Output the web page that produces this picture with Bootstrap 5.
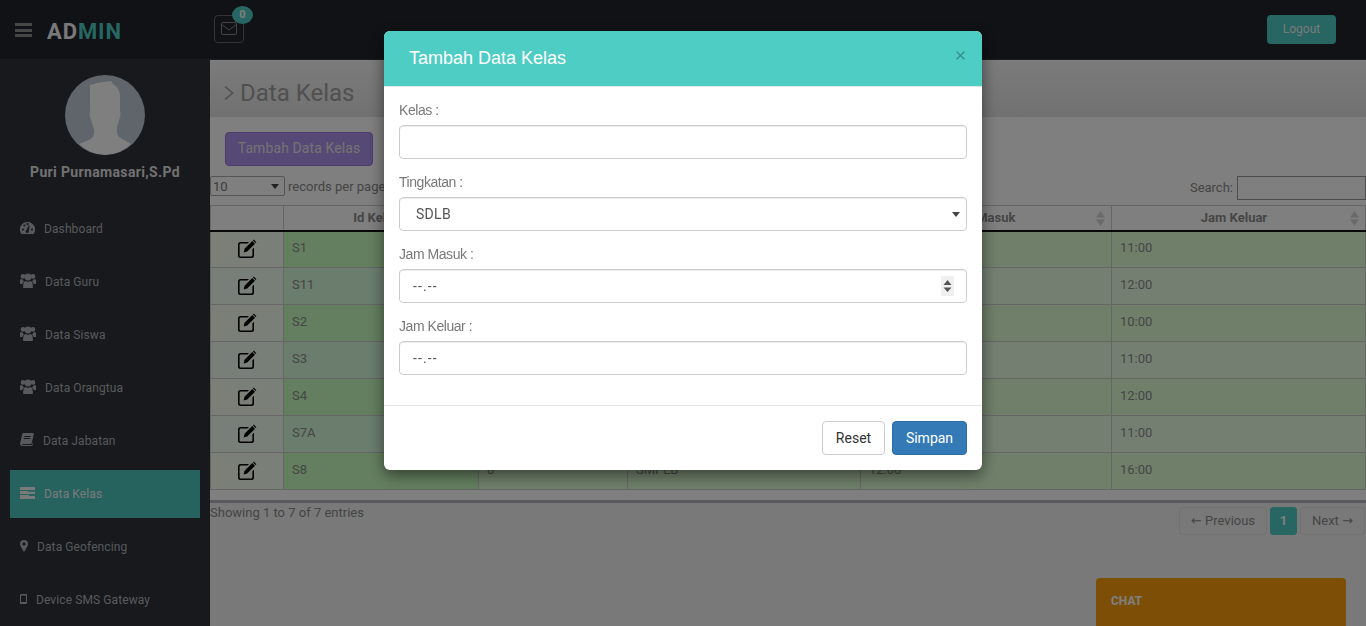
<!DOCTYPE html>
<html lang="id">

<head>
  <meta charset="UTF-8" />
  <meta name="viewport" content="width=device-width, initial-scale=1.0" />
  <title>Data Kelas</title>
  <link href="https://cdn.jsdelivr.net/npm/bootstrap@5.3.3/dist/css/bootstrap.min.css" rel="stylesheet" />
  <style>
    html, body { height: 626px; overflow: hidden; }
    body { font-family: Roboto, "Noto Sans", sans-serif; font-size: 13px; color: #8a8a8a; background: #f2f2f2; }

    /* header */
    .top-bar { height: 60px; background: #22242a; border-bottom: 1px solid #33363d; padding: 0 30px 0 15px; }
    .burger { width: 17px; height: 14px; border-top: 3px solid #8d8d8d; border-bottom: 3px solid #8d8d8d; position: relative; }
    .burger::after { content: ""; position: absolute; left: 0; right: 0; top: 3px; height: 3px; background: #8d8d8d; }
    .brand { font-size: 22px; font-weight: 700; letter-spacing: .9px; color: #f2f2f2; margin-left: 15px; width: 167px; padding-top: 3px; }
    .brand span { color: #4ecdc4; }
    .mail-btn { width: 30px; height: 28px; border: 1px solid #666; border-radius: 4px; margin-top: -2px; }
    .mail-btn svg { width: 16px; height: 13px; stroke: #888; fill: none; }
    .mail-count { top: -10px; left: 17px; width: 21px; height: 18px; border-radius: 50%; background: #4ecdc4; color: #fff; font-size: 11px; font-weight: 700; line-height: 18px; text-align: center; }
    .logout-btn { background: #4ecdc4; color: #f2f2f2; font-size: 12px; width: 69px; height: 29px; border-radius: 4px; line-height: 29px; text-align: center; margin-top: -1px; }

    /* sidebar */
    .side-bar { width: 210px; flex: none; height: 566px; background: #2f323a; padding-top: 15px; }
    .avatar { width: 80px; height: 80px; border-radius: 50%; background: #bfcbd6; overflow: hidden; }
    .avatar svg { width: 80px; height: 80px; fill: #fff; }
    .user-name { color: #fff; font-size: 14px; font-weight: 700; margin: 7px 0 23px; line-height: 20px; letter-spacing: .35px; opacity: .86; }
    .side-link { height: 48px; margin: 0 10px 5px; padding-left: 10px; color: #aeb2b7; font-size: 12px; letter-spacing: .1px; }
    .side-link svg { fill: #aeb2b7; margin-right: 9px; margin-top: -3px; flex: none; }
    .side-link.on { background: #4ecdc4; color: #fff; opacity: .95; }
    .side-link.on svg { fill: #fff; }

    /* content */
    .main-col { min-width: 0; flex: 1; }
    .title-band { height: 57px; background: linear-gradient(#f8f8f8, #e2e2e2); padding: 9px 0 0 13px; color: #9e9e9e; }
    .title-band svg { stroke: #9e9e9e; fill: none; stroke-width: 1.6; margin-right: 6px; }
    .title-band h1 { font-size: 24px; font-weight: 400; margin: 0; color: #a0a0a0; }
    .white-panel { height: 386px; background: #fff; border-bottom: 3px solid #b4b4bd; padding-top: 15px; }
    .add-btn { background: #ac92ec; color: #e6e6e6; border: 1px solid #967adc; border-radius: 4px; height: 34px; width: 148px; line-height: 30px; text-align: center; font-size: 14px; margin: 0 0 10px 15px; letter-spacing: .1px; }
    .tools-row { height: 29px; font-size: 13px; }
    .len-select { width: 75px; height: 20px; font-size: 13px; border: 1px solid #aaa; border-radius: 2px; padding: 0 0 0 2px; margin-right: 3px; color: #777; background-position: right 5px center; background-size: 8px 5px; }
    .search-label { padding-top: 2px; }
    .search-box { width: 129px; height: 24px; border: 1.5px solid #999; background: #fff; margin-left: 4px; }

    .kelas-table { table-layout: fixed; width: 100%; border-collapse: collapse; color: #8c8c8c; }
    .kelas-table col:nth-child(1) { width: 73px; }
    .kelas-table col:nth-child(2) { width: 195px; }
    .kelas-table col:nth-child(3) { width: 149px; }
    .kelas-table col:nth-child(4) { width: 233px; }
    .kelas-table col:nth-child(5) { width: 251px; }
    .kelas-table th, .kelas-table td { border: 1px solid #ccc; }
    .kelas-table th { height: 25px; padding: 0 9px 0 0; text-align: center; font-weight: 700; font-size: 13px; border-bottom: 2px solid #111; position: relative; color: #8c8c8c; }
    .kelas-table td { height: 37px; padding: 6px 8px 9px; line-height: 20px; background: #deffd4; }
    .kelas-table tr:nth-child(even) td { background: #e8ffe4; }
    .kelas-table td:nth-child(1) { background: #f4ffee; text-align: center; padding: 0; }
    .kelas-table tr:nth-child(even) td:nth-child(1) { background: #f0fff0; }
    .kelas-table td:nth-child(2) { background: #c8ffbe; }
    .kelas-table tr:nth-child(even) td:nth-child(2) { background: #d6fbd8; }
    .edit-ico { width: 20px; height: 20px; color: #000; display: block; margin: -1px auto 0; }
    .sort-ico { position: absolute; right: 6px; top: 5px; width: 9px; height: 15px; fill: #d4d4d4; }

    .page-foot { font-size: 13px; }
    .pager-btn { height: 28px; border: 1px solid #e4e4e4; border-radius: 3px; line-height: 26px; text-align: center; color: #8c8c8c; margin-left: 3px; }
    .pager-prev { width: 88px; }
    .pager-next { width: 65px; margin-right: 1px; }
    .pager-btn span { font-family: "DejaVu Sans", sans-serif; }
    .pager-btn.on { background: #4ecdc4; color: #fff; border-color: #4ecdc4; font-weight: 700; width: 27px; }

    .chat-tab { position: fixed; left: 1096px; top: 578px; width: 250px; height: 60px; background: #fa9f0c; border-radius: 4px 4px 0 0; color: #fff; font-size: 12px; font-weight: 700; padding: 15px; line-height: 17px; }

    /* modal */
    .modal-dialog { margin: 31px auto; --bs-modal-width: 598px; }
    .modal-content { border: 0; border-radius: 6px; box-shadow: 0 5px 15px rgba(0, 0, 0, .5); }
    .modal-head { height: 56px; background: #4ecdc4; border-bottom: 1px solid #e5e5e5; border-radius: 6px 6px 0 0; padding: 0 16px 0 25px; }
    .modal-head h5 { font-family: "Liberation Sans", Arial, sans-serif; font-size: 18px; font-weight: 400; margin: 0; color: #fff; }
    .close-x { width: 11px; height: 11px; padding: 0; background-size: 11px; opacity: .3; margin-top: -6px; }
    .modal-main { padding: 14px 15px 15px; height: 318px; }
    .field { margin-bottom: 14px; }
    .field label { display: block; font-family: "Liberation Sans", Arial, sans-serif; font-size: 14px; letter-spacing: -.45px; line-height: 18px; margin-bottom: 6px; color: #797979; }
    .field input, .field select { height: 34px; padding: 6px 12px; font-size: 14px; color: #555; border: 1px solid #ccc; border-radius: 4px; box-shadow: inset 0 1px 1px rgba(0, 0, 0, .075); background-color: #fff; }
    .field input { letter-spacing: 1.1px; padding-left: 13px; }
    .field select { letter-spacing: .3px; padding-left: 16px; font-family: Roboto, sans-serif; background-position: right 6px center; background-size: 8px 5px; }
    .form-select { background-image: url("data:image/svg+xml,%3csvg xmlns='http://www.w3.org/2000/svg' viewBox='0 0 8 5'%3e%3cpath fill='%23444' d='M0 0h8L4 5z'/%3e%3c/svg%3e"); }
    .spin-box { right: 13px; top: 7px; width: 13px; height: 20px; background: #f0f0f0; }
    .spin-box svg { width: 13px; height: 20px; fill: #555; display: block; }
    .modal-foot { border-top: 1px solid #e5e5e5; padding: 15px; height: 65px; gap: 7px; }
    .foot-btn { height: 34px; line-height: 32px; border-radius: 4px; font-size: 14px; text-align: center; border: 1px solid #ccc; color: #333; background: #fff; padding: 0; }
    .foot-btn.reset-btn { width: 63px; }
    .foot-btn.save-btn { width: 75px; background: #337ab7; border-color: #2e6da4; color: #fff; }
  </style>
</head>

<body>
  <svg width="0" height="0" class="position-absolute">
    <symbol id="i-edit" viewBox="0 0 20 20">
      <path d="M3.500 3H12L10.400 4.600H3.800Q2.600 4.600 2.600 5.800V16.200Q2.600 17.400 3.800 17.400H14.200Q15.400 17.400 15.400 16.200V10.300L17 8.700V16.500Q17 19 14.500 19H3.500Q1 19 1 16.500V5.500Q1 3 3.500 3Z" fill="currentColor" />
      <path d="M15.300 2L18 4.700L10.200 12.500L6.600 13.600L7.600 9.700Z" fill="currentColor" />
      <path d="M16.800 .6L19.400 3.200L18.600 4L16 1.400Z" fill="currentColor" />
    </symbol>
    <symbol id="i-gauge" viewBox="0 0 15 12">
      <path d="M7.500 0A7.500 7.500 0 0 0 1 11.400L1.600 12H13.400L14 11.400A7.500 7.500 0 0 0 7.500 0ZM3 8.600A1.100 1.100 0 1 1 3 6.400 1.100 1.100 0 0 1 3 8.600ZM4.400 4.600A1.100 1.100 0 1 1 4.400 2.400 1.100 1.100 0 0 1 4.400 4.600ZM7.500 3.200A1.100 1.100 0 1 1 7.500 1 1.100 1.100 0 0 1 7.500 3.200ZM8.800 9.200A1.600 1.600 0 1 1 6.600 8L8.600 3.400H9.600ZM12 8.600A1.100 1.100 0 1 1 12 6.400 1.100 1.100 0 0 1 12 8.600Z" fill-rule="evenodd" />
    </symbol>
    <symbol id="i-users" viewBox="0 0 16 15">
      <circle cx="3" cy="3.400" r="2.300" /><circle cx="13" cy="3.400" r="2.300" /><circle cx="8" cy="4" r="3.400" />
      <path d="M0 6.600Q1 6 2.600 6.400 3.200 8 4 8.600 2.600 9.400 2.400 11H0Z" /><path d="M16 6.600Q15 6 13.400 6.400 12.800 8 12 8.600 13.400 9.400 13.600 11H16Z" />
      <path d="M5 8Q8 9.600 11 8 12.800 8.800 12.800 12V15H3.200V12Q3.200 8.800 5 8Z" />
    </symbol>
    <symbol id="i-book" viewBox="0 0 14 13">
      <path d="M3.200 0H13.200L14 .8 11.600 10.600Q11.400 11 10.800 11H2.600Q1.800 11 2 11.600 2.200 12 2.800 12H12L12.800 9.400 13.200 10 12.400 12.600Q12.200 13 11.800 13H2.400Q.2 13 0 10.800L2.400 .8Q2.600 0 3.200 0ZM4.400 3V4H10.600L10.900 3ZM3.800 5V6H10L10.300 5Z" fill-rule="evenodd" />
    </symbol>
    <symbol id="i-rows" viewBox="0 0 15 12">
      <path d="M0 0H15V3H0ZM0 4H8V4.800H15V7H0ZM0 8H9V9H15V12H0Z" />
    </symbol>
    <symbol id="i-pin" viewBox="0 0 8 12">
      <path d="M4 0A4 4 0 0 0 0 4Q0 6 4 12 8 6 8 4A4 4 0 0 0 4 0ZM4 5.600A1.700 1.700 0 1 1 4 2.200 1.700 1.700 0 0 1 4 5.600Z" fill-rule="evenodd" />
    </symbol>
    <symbol id="i-phone" viewBox="0 0 7 10">
      <path d="M1 0H6Q7 0 7 1V9Q7 10 6 10H1Q0 10 0 9V1Q0 0 1 0ZM1 1.400V8H6V1.400Z" fill-rule="evenodd" />
    </symbol>
    <symbol id="i-sort" viewBox="0 0 9 15">
      <path d="M4.500 0L9 6.500H0ZM4.500 15L0 8.500H9Z" />
    </symbol>
  </svg>

  <header class="top-bar d-flex align-items-center">
    <div class="burger"></div>
    <div class="brand">AD<span>MIN</span></div>
    <div class="mail-btn position-relative d-flex align-items-center justify-content-center">
      <svg viewBox="0 0 16 13"><rect x=".5" y=".5" width="15" height="12" rx="1.500" /><path d="M.5 2.500L8 8L15.500 2.500" /></svg>
      <span class="mail-count position-absolute">0</span>
    </div>
    <div class="logout-btn ms-auto">Logout</div>
  </header>

  <div class="d-flex">
    <aside class="side-bar">
      <div class="avatar mx-auto">
        <svg viewBox="0 0 80 80"><path d="M25 10Q34 7 46 6L48 9Q55 13 55 22V36Q56 38 55 42L52 52Q51 58 54 62L66 69Q54 80 40 80 26 80 14 69L26 64Q30 60 29 54L25 42Q24 38 25 36Z" /></svg>
      </div>
      <div class="user-name text-center">Puri Purnamasari,S.Pd</div>
      <nav>
        <div class="side-link d-flex align-items-center"><svg width="15" height="12"><use href="#i-gauge" /></svg>Dashboard</div>
        <div class="side-link d-flex align-items-center"><svg width="16" height="15"><use href="#i-users" /></svg>Data Guru</div>
        <div class="side-link d-flex align-items-center"><svg width="16" height="15"><use href="#i-users" /></svg>Data Siswa</div>
        <div class="side-link d-flex align-items-center"><svg width="16" height="15"><use href="#i-users" /></svg>Data Orangtua</div>
        <div class="side-link d-flex align-items-center"><svg width="14" height="13"><use href="#i-book" /></svg>Data Jabatan</div>
        <div class="side-link on d-flex align-items-center"><svg width="15" height="12"><use href="#i-rows" /></svg>Data Kelas</div>
        <div class="side-link d-flex align-items-center"><svg width="8" height="12"><use href="#i-pin" /></svg>Data Geofencing</div>
        <div class="side-link d-flex align-items-center"><svg width="7" height="10"><use href="#i-phone" /></svg>Device SMS Gateway</div>
      </nav>
    </aside>

    <main class="main-col">
      <div class="title-band d-flex align-items-center">
        <svg width="11" height="16" viewBox="0 0 11 16"><path d="M2 1.500L9.500 8L2 14.500" /></svg>
        <h1>Data Kelas</h1>
      </div>

      <div class="white-panel">
        <div class="add-btn">Tambah Data Kelas</div>
        <div class="tools-row d-flex justify-content-between">
          <div><select class="form-select d-inline-block len-select"><option>10</option></select>records per page</div>
          <div class="d-flex align-items-start"><span class="search-label">Search:</span><div class="search-box"></div></div>
        </div>
        <table class="kelas-table">
          <colgroup><col /><col /><col /><col /><col /><col /></colgroup>
          <thead>
            <tr>
              <th></th>
              <th>Id Kelas<svg class="sort-ico"><use href="#i-sort" /></svg></th>
              <th>Kelas<svg class="sort-ico"><use href="#i-sort" /></svg></th>
              <th>Tingkatan<svg class="sort-ico"><use href="#i-sort" /></svg></th>
              <th>Jam Masuk<svg class="sort-ico"><use href="#i-sort" /></svg></th>
              <th>Jam Keluar<svg class="sort-ico"><use href="#i-sort" /></svg></th>
            </tr>
          </thead>
          <tbody>
            <tr><td><svg class="edit-ico"><use href="#i-edit" /></svg></td><td>S1</td><td>1</td><td>SDLB</td><td>07:00</td><td>11:00</td></tr>
            <tr><td><svg class="edit-ico"><use href="#i-edit" /></svg></td><td>S11</td><td>11</td><td>SMALB</td><td>07:00</td><td>12:00</td></tr>
            <tr><td><svg class="edit-ico"><use href="#i-edit" /></svg></td><td>S2</td><td>2</td><td>SDLB</td><td>07:00</td><td>10:00</td></tr>
            <tr><td><svg class="edit-ico"><use href="#i-edit" /></svg></td><td>S3</td><td>3</td><td>SDLB</td><td>07:00</td><td>11:00</td></tr>
            <tr><td><svg class="edit-ico"><use href="#i-edit" /></svg></td><td>S4</td><td>4</td><td>SDLB</td><td>07:00</td><td>12:00</td></tr>
            <tr><td><svg class="edit-ico"><use href="#i-edit" /></svg></td><td>S7A</td><td>7A</td><td>SMPLB</td><td>07:00</td><td>11:00</td></tr>
            <tr><td><svg class="edit-ico"><use href="#i-edit" /></svg></td><td>S8</td><td>8</td><td>SMPLB</td><td>12:00</td><td>16:00</td></tr>
          </tbody>
        </table>
      </div>

      <div class="page-foot d-flex justify-content-between">
        <div>Showing 1 to 7 of 7 entries</div>
        <div class="d-flex pt-1">
          <div class="pager-btn pager-prev"><span>←</span> Previous</div>
          <div class="pager-btn on">1</div>
          <div class="pager-btn pager-next">Next <span>→</span></div>
        </div>
      </div>
    </main>
  </div>

  <div class="chat-tab">CHAT</div>

  <div class="modal-backdrop show"></div>
  <div class="modal d-block" tabindex="-1">
    <div class="modal-dialog">
      <div class="modal-content">
        <div class="modal-head d-flex align-items-center justify-content-between">
          <h5>Tambah Data Kelas</h5>
          <button type="button" class="btn-close close-x"></button>
        </div>
        <div class="modal-main">
          <div class="field">
            <label>Kelas :</label>
            <input type="text" class="form-control" />
          </div>
          <div class="field">
            <label>Tingkatan :</label>
            <select class="form-select"><option>SDLB</option></select>
          </div>
          <div class="field">
            <label>Jam Masuk :</label>
            <div class="position-relative">
              <input type="text" class="form-control" value="--.--" />
              <div class="spin-box position-absolute">
                <svg viewBox="0 0 13 20"><path d="M6.500 4L10.500 9H2.500ZM6.500 16L2.500 11.500H10.500Z" /></svg>
              </div>
            </div>
          </div>
          <div class="field">
            <label>Jam Keluar :</label>
            <input type="text" class="form-control" value="--.--" />
          </div>
        </div>
        <div class="modal-foot d-flex justify-content-end">
          <div class="foot-btn reset-btn">Reset</div>
          <div class="foot-btn save-btn">Simpan</div>
        </div>
      </div>
    </div>
  </div>

  <script src="https://cdn.jsdelivr.net/npm/bootstrap@5.3.3/dist/js/bootstrap.bundle.min.js"></script>
</body>

</html>
